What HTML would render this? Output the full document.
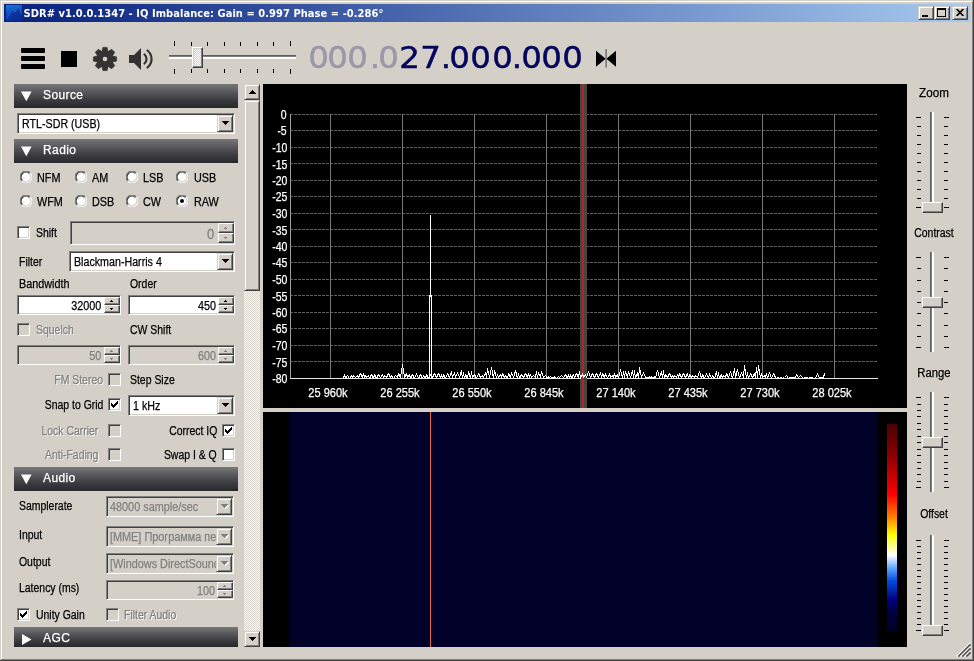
<!DOCTYPE html>
<html><head><meta charset="utf-8"><title>SDR#</title><style>
html,body{margin:0;padding:0;background:#D4D0C8;}
#w{will-change:transform;position:relative;width:974px;height:661px;overflow:hidden;font-family:"Liberation Sans",sans-serif;font-size:12px;}
#w div,#w span,#w svg{position:absolute;}
.t{font-size:12px;line-height:14px;white-space:nowrap;color:#000;-webkit-text-stroke:.25px;transform:scaleX(.87);transform-origin:0 0;}
.t.r{transform-origin:100% 0;text-align:right}
.t.c{transform-origin:50% 0;text-align:center}
.t.w{color:#fff}
.t.w.c{transform:scaleX(.92)}
.t.h{color:#fff;font-size:12px;line-height:14px;transform:none;letter-spacing:.4px}
.t.dis{color:#808080;text-shadow:1px 1px 0 #fff}
.t.dis2{color:#808080}
.title{font-family:"DejaVu Sans Condensed","DejaVu Sans",sans-serif;font-weight:bold;font-size:11px;line-height:16px;color:#fff;white-space:nowrap;transform-origin:0 0;letter-spacing:.06px;}
.sunk{box-sizing:border-box;border:1px solid;border-color:#808080 #fff #fff #808080;box-shadow:inset 1px 1px 0 #404040,inset -1px -1px 0 #D4D0C8;}
.btn{box-sizing:border-box;background:#D4D0C8;border:1px solid;border-color:#D4D0C8 #404040 #404040 #D4D0C8;box-shadow:inset 1px 1px 0 #fff,inset -1px -1px 0 #808080;}
.btn.thin{border-color:#fff #404040 #404040 #fff;box-shadow:inset -1px -1px 0 #808080;}
.thumb{box-sizing:border-box;background:repeating-conic-gradient(#fff 0% 25%, #D4D0C8 0% 50%) 0 0/2px 2px;border:1px solid;border-color:#fff #404040 #404040 #fff;box-shadow:inset -1px -1px 0 #808080,inset 1px 1px 0 #D4D0C8;}
.thumb.plain{background:#D4D0C8}
.hdr{background:linear-gradient(to bottom,#77777a 0%,#57575b 35%,#3a3a3e 70%,#28282c 100%);}
.fd{font-family:"DejaVu Sans","Liberation Sans",sans-serif;font-size:30px;line-height:36px;text-align:center;-webkit-text-stroke:.5px currentColor;transform:scaleX(1.08);transform-origin:50% 50%;}
.fd.g{color:#9a98a8}
.fd.d{color:#04045c}
</style></head><body><div id="w">
<div style="left:0px;top:0px;width:974px;height:661px;background:#D4D0C8"></div>
<div style="left:1px;top:1px;width:971px;height:1px;background:#fff"></div>
<div style="left:1px;top:1px;width:1px;height:658px;background:#fff"></div>
<div style="left:0px;top:660px;width:974px;height:1px;background:#404040"></div>
<div style="left:973px;top:0px;width:1px;height:661px;background:#404040"></div>
<div style="left:1px;top:659px;width:972px;height:1px;background:#808080"></div>
<div style="left:972px;top:1px;width:1px;height:659px;background:#808080"></div>
<div style="left:4px;top:4px;width:966px;height:18px;background:linear-gradient(to right,#0A2480 0%,#0A2480 3%,#A6CAF0 100%)"></div>
<svg style="left:6px;top:5px" width="16" height="16"><defs><linearGradient id="ig" x1="0" y1="0" x2="0.3" y2="1"><stop offset="0" stop-color="#1678e6"/><stop offset="0.5" stop-color="#1050c0"/><stop offset="1" stop-color="#0a2c98"/></linearGradient></defs><rect width="16" height="16" fill="url(#ig)"/><path d="M1 13 7 4 9 7 12 2 16 9V13z" fill="#0a2a8c" opacity=".55"/><path d="M1 13 7 4 9 7 12 2 16 9" fill="none" stroke="#4a8ae8" stroke-width=".7" opacity=".6"/></svg>
<span class="title" style="left:23.5px;top:6px">SDR# v1.0.0.1347 - IQ Imbalance: Gain = 0.997 Phase = -0.286°</span>
<div class="btn " style="left:918px;top:6px;width:16px;height:14px"><div style="left:3px;top:8px;width:6px;height:2px;background:#000"></div></div>
<div class="btn " style="left:934px;top:6px;width:16px;height:14px"><div style="left:2px;top:1px;width:9px;height:9px;box-sizing:border-box;border:1px solid #000;border-top-width:2px"></div></div>
<div class="btn " style="left:952px;top:6px;width:16px;height:14px"><svg style="left:3px;top:2px" width="8" height="7"><path d="M.6 0 7.4 7M7.4 0 .6 7" stroke="#000" stroke-width="1.7" fill="none"/></svg></div>
<div style="left:21px;top:48px;width:24px;height:5px;background:#000;border-radius:1px"></div>
<div style="left:21px;top:56px;width:24px;height:5px;background:#000;border-radius:1px"></div>
<div style="left:21px;top:64px;width:24px;height:5px;background:#000;border-radius:1px"></div>
<div style="left:61px;top:51px;width:16px;height:16px;background:#000"></div>
<svg style="left:92px;top:46px" width="26" height="26" viewBox="-13 -13 26 26"><g fill="#353232" stroke="#353232" stroke-width="0.7" stroke-linejoin="round"><polygon points="-3,-7.5 -2.1,-11.6 2.1,-11.6 3,-7.5" transform="rotate(0)"/><polygon points="-3,-7.5 -2.1,-11.6 2.1,-11.6 3,-7.5" transform="rotate(45)"/><polygon points="-3,-7.5 -2.1,-11.6 2.1,-11.6 3,-7.5" transform="rotate(90)"/><polygon points="-3,-7.5 -2.1,-11.6 2.1,-11.6 3,-7.5" transform="rotate(135)"/><polygon points="-3,-7.5 -2.1,-11.6 2.1,-11.6 3,-7.5" transform="rotate(180)"/><polygon points="-3,-7.5 -2.1,-11.6 2.1,-11.6 3,-7.5" transform="rotate(225)"/><polygon points="-3,-7.5 -2.1,-11.6 2.1,-11.6 3,-7.5" transform="rotate(270)"/><polygon points="-3,-7.5 -2.1,-11.6 2.1,-11.6 3,-7.5" transform="rotate(315)"/><circle r="8.3"/></g><circle r="2.3" fill="#D4D0C8"/></svg>
<svg style="left:128px;top:46px" width="27" height="26" viewBox="0 0 27 26"><path d="M1 9h5l7-7v22l-7-7H1z" fill="#353232"/><path d="M16.5 8.5a6 6 0 0 1 0 9" fill="none" stroke="#353232" stroke-width="2.2" stroke-linecap="round"/><path d="M19.5 4.5a11 11 0 0 1 0 17" fill="none" stroke="#353232" stroke-width="2.2" stroke-linecap="round"/></svg>
<div style="left:169px;top:55px;width:127px;height:2px;background:#808080"></div>
<div style="left:169px;top:55px;width:127px;height:1px;background:#606060"></div>
<div style="left:169px;top:57px;width:127px;height:2px;background:#fff"></div>
<div style="left:174px;top:41px;width:1px;height:5px;background:#000"></div>
<div style="left:174px;top:69px;width:1px;height:5px;background:#000"></div>
<div style="left:191px;top:42px;width:1px;height:4px;background:#000"></div>
<div style="left:191px;top:69px;width:1px;height:4px;background:#000"></div>
<div style="left:207px;top:42px;width:1px;height:4px;background:#000"></div>
<div style="left:207px;top:69px;width:1px;height:4px;background:#000"></div>
<div style="left:224px;top:42px;width:1px;height:4px;background:#000"></div>
<div style="left:224px;top:69px;width:1px;height:4px;background:#000"></div>
<div style="left:240px;top:42px;width:1px;height:4px;background:#000"></div>
<div style="left:240px;top:69px;width:1px;height:4px;background:#000"></div>
<div style="left:257px;top:42px;width:1px;height:4px;background:#000"></div>
<div style="left:257px;top:69px;width:1px;height:4px;background:#000"></div>
<div style="left:273px;top:42px;width:1px;height:4px;background:#000"></div>
<div style="left:273px;top:69px;width:1px;height:4px;background:#000"></div>
<div style="left:290px;top:41px;width:1px;height:5px;background:#000"></div>
<div style="left:290px;top:69px;width:1px;height:5px;background:#000"></div>
<div class="thumb" style="left:192px;top:47px;width:11px;height:21px"></div>
<span class="fd g" style="left:309px;top:40px;width:17px">0</span>
<span class="fd g" style="left:328.4px;top:40px;width:17px">0</span>
<span class="fd g" style="left:347.9px;top:40px;width:17px">0</span>
<span class="fd g" style="left:369.5px;top:40px;width:8px">.</span>
<span class="fd g" style="left:379.1px;top:40px;width:17px">0</span>
<span class="fd d" style="left:400.3px;top:40px;width:17px">2</span>
<span class="fd d" style="left:421.3px;top:40px;width:17px">7</span>
<span class="fd d" style="left:440.5px;top:40px;width:8px">.</span>
<span class="fd d" style="left:450px;top:40px;width:17px">0</span>
<span class="fd d" style="left:471.2px;top:40px;width:17px">0</span>
<span class="fd d" style="left:493px;top:40px;width:17px">0</span>
<span class="fd d" style="left:511.5px;top:40px;width:8px">.</span>
<span class="fd d" style="left:522px;top:40px;width:17px">0</span>
<span class="fd d" style="left:542.2px;top:40px;width:17px">0</span>
<span class="fd d" style="left:562.5px;top:40px;width:17px">0</span>
<svg style="left:596px;top:49px" width="21" height="19"><polygon points="0,1.7 9.6,9.7 0,17.7" fill="#000"/><polygon points="20,1.7 10.4,9.7 20,17.7" fill="#000"/><rect x="9.4" y="0.2" width="1.4" height="18.3" fill="#6c6c6c"/></svg>
<div class="hdr" style="left:14px;top:84px;width:224px;height:24px"></div>
<svg style="left:21px;top:91px" width="11" height="11"><polygon points="0,0.5 10.6,0.5 5.3,10.2" fill="#fff"/></svg>
<span class="t h" style="left:43px;top:88px">Source</span>
<div class="sunk" style="left:17px;top:113px;width:218px;height:21px;background:#fff"></div>
<div class="btn " style="left:217px;top:115px;width:16px;height:17px"></div>
<svg style="left:222px;top:121px" width="7" height="4" shape-rendering="crispEdges"><polygon points="0,0 7,0 3.5,4" fill="#000"/></svg>
<div style="left:19px;top:115px;width:198px;height:17px;overflow:hidden"><span class="t " style="left:3px;top:2px;transform:scaleX(0.89)">RTL-SDR (USB)</span></div>
<div class="hdr" style="left:14px;top:139px;width:224px;height:24px"></div>
<svg style="left:21px;top:146px" width="11" height="11"><polygon points="0,0.5 10.6,0.5 5.3,10.2" fill="#fff"/></svg>
<span class="t h" style="left:43px;top:143px">Radio</span>
<svg style="left:20px;top:171px" width="12" height="12"><circle cx="6" cy="6" r="5.5" fill="#fff"/><path d="M10.2 1.8A5.9 5.9 0 0 0 1.8 10.2" fill="none" stroke="#808080" stroke-width="1.1"/><path d="M9.5 2.5A4.9 4.9 0 0 0 2.5 9.5" fill="none" stroke="#404040" stroke-width="1.1"/><path d="M10.2 1.8A5.9 5.9 0 0 1 1.8 10.2" fill="none" stroke="#fff" stroke-width="1.1"/><path d="M9.5 2.5A4.9 4.9 0 0 1 2.5 9.5" fill="none" stroke="#D4D0C8" stroke-width="1.1"/></svg>
<span class="t " style="left:37px;top:171px;transform:scaleX(.9)">NFM</span>
<svg style="left:75px;top:171px" width="12" height="12"><circle cx="6" cy="6" r="5.5" fill="#fff"/><path d="M10.2 1.8A5.9 5.9 0 0 0 1.8 10.2" fill="none" stroke="#808080" stroke-width="1.1"/><path d="M9.5 2.5A4.9 4.9 0 0 0 2.5 9.5" fill="none" stroke="#404040" stroke-width="1.1"/><path d="M10.2 1.8A5.9 5.9 0 0 1 1.8 10.2" fill="none" stroke="#fff" stroke-width="1.1"/><path d="M9.5 2.5A4.9 4.9 0 0 1 2.5 9.5" fill="none" stroke="#D4D0C8" stroke-width="1.1"/></svg>
<span class="t " style="left:92px;top:171px;transform:scaleX(.9)">AM</span>
<svg style="left:126px;top:171px" width="12" height="12"><circle cx="6" cy="6" r="5.5" fill="#fff"/><path d="M10.2 1.8A5.9 5.9 0 0 0 1.8 10.2" fill="none" stroke="#808080" stroke-width="1.1"/><path d="M9.5 2.5A4.9 4.9 0 0 0 2.5 9.5" fill="none" stroke="#404040" stroke-width="1.1"/><path d="M10.2 1.8A5.9 5.9 0 0 1 1.8 10.2" fill="none" stroke="#fff" stroke-width="1.1"/><path d="M9.5 2.5A4.9 4.9 0 0 1 2.5 9.5" fill="none" stroke="#D4D0C8" stroke-width="1.1"/></svg>
<span class="t " style="left:143px;top:171px;transform:scaleX(.9)">LSB</span>
<svg style="left:176px;top:171px" width="12" height="12"><circle cx="6" cy="6" r="5.5" fill="#fff"/><path d="M10.2 1.8A5.9 5.9 0 0 0 1.8 10.2" fill="none" stroke="#808080" stroke-width="1.1"/><path d="M9.5 2.5A4.9 4.9 0 0 0 2.5 9.5" fill="none" stroke="#404040" stroke-width="1.1"/><path d="M10.2 1.8A5.9 5.9 0 0 1 1.8 10.2" fill="none" stroke="#fff" stroke-width="1.1"/><path d="M9.5 2.5A4.9 4.9 0 0 1 2.5 9.5" fill="none" stroke="#D4D0C8" stroke-width="1.1"/></svg>
<span class="t " style="left:194px;top:171px;transform:scaleX(.9)">USB</span>
<svg style="left:20px;top:195px" width="12" height="12"><circle cx="6" cy="6" r="5.5" fill="#fff"/><path d="M10.2 1.8A5.9 5.9 0 0 0 1.8 10.2" fill="none" stroke="#808080" stroke-width="1.1"/><path d="M9.5 2.5A4.9 4.9 0 0 0 2.5 9.5" fill="none" stroke="#404040" stroke-width="1.1"/><path d="M10.2 1.8A5.9 5.9 0 0 1 1.8 10.2" fill="none" stroke="#fff" stroke-width="1.1"/><path d="M9.5 2.5A4.9 4.9 0 0 1 2.5 9.5" fill="none" stroke="#D4D0C8" stroke-width="1.1"/></svg>
<span class="t " style="left:37px;top:195px;transform:scaleX(.9)">WFM</span>
<svg style="left:75px;top:195px" width="12" height="12"><circle cx="6" cy="6" r="5.5" fill="#fff"/><path d="M10.2 1.8A5.9 5.9 0 0 0 1.8 10.2" fill="none" stroke="#808080" stroke-width="1.1"/><path d="M9.5 2.5A4.9 4.9 0 0 0 2.5 9.5" fill="none" stroke="#404040" stroke-width="1.1"/><path d="M10.2 1.8A5.9 5.9 0 0 1 1.8 10.2" fill="none" stroke="#fff" stroke-width="1.1"/><path d="M9.5 2.5A4.9 4.9 0 0 1 2.5 9.5" fill="none" stroke="#D4D0C8" stroke-width="1.1"/></svg>
<span class="t " style="left:92px;top:195px;transform:scaleX(.9)">DSB</span>
<svg style="left:126px;top:195px" width="12" height="12"><circle cx="6" cy="6" r="5.5" fill="#fff"/><path d="M10.2 1.8A5.9 5.9 0 0 0 1.8 10.2" fill="none" stroke="#808080" stroke-width="1.1"/><path d="M9.5 2.5A4.9 4.9 0 0 0 2.5 9.5" fill="none" stroke="#404040" stroke-width="1.1"/><path d="M10.2 1.8A5.9 5.9 0 0 1 1.8 10.2" fill="none" stroke="#fff" stroke-width="1.1"/><path d="M9.5 2.5A4.9 4.9 0 0 1 2.5 9.5" fill="none" stroke="#D4D0C8" stroke-width="1.1"/></svg>
<span class="t " style="left:143px;top:195px;transform:scaleX(.9)">CW</span>
<svg style="left:176px;top:195px" width="12" height="12"><circle cx="6" cy="6" r="5.5" fill="#fff"/><path d="M10.2 1.8A5.9 5.9 0 0 0 1.8 10.2" fill="none" stroke="#808080" stroke-width="1.1"/><path d="M9.5 2.5A4.9 4.9 0 0 0 2.5 9.5" fill="none" stroke="#404040" stroke-width="1.1"/><path d="M10.2 1.8A5.9 5.9 0 0 1 1.8 10.2" fill="none" stroke="#fff" stroke-width="1.1"/><path d="M9.5 2.5A4.9 4.9 0 0 1 2.5 9.5" fill="none" stroke="#D4D0C8" stroke-width="1.1"/><circle cx="6" cy="6" r="2" fill="#000"/></svg>
<span class="t " style="left:194px;top:195px;transform:scaleX(.9)">RAW</span>
<div class="sunk" style="left:17px;top:226px;width:13px;height:13px;background:#fff"></div>
<span class="t " style="left:36px;top:226px;">Shift</span>
<div class="sunk" style="left:70px;top:221px;width:165px;height:24px;background:#D4D0C8"></div>
<div class="btn thin" style="left:218px;top:223px;width:16px;height:10px"></div>
<div class="btn thin" style="left:218px;top:233px;width:16px;height:10px"></div>
<svg style="left:224px;top:227px" width="3" height="2" shape-rendering="crispEdges"><polygon points="0,2 3,2 1.5,0" fill="#808080"/></svg>
<svg style="left:224px;top:237px" width="3" height="2" shape-rendering="crispEdges"><polygon points="0,0 3,0 1.5,2" fill="#808080"/></svg>
<span class="t r dis2" style="right:760px;top:225px;font-size:15px;line-height:17px;-webkit-text-stroke:.3px">0</span>
<span class="t " style="left:19px;top:255px;">Filter</span>
<div class="sunk" style="left:69px;top:251px;width:166px;height:21px;background:#fff"></div>
<div class="btn " style="left:217px;top:253px;width:16px;height:17px"></div>
<svg style="left:222px;top:259px" width="7" height="4" shape-rendering="crispEdges"><polygon points="0,0 7,0 3.5,4" fill="#000"/></svg>
<div style="left:71px;top:253px;width:146px;height:17px;overflow:hidden"><span class="t " style="left:3px;top:2px;transform:scaleX(0.89)">Blackman-Harris 4</span></div>
<span class="t " style="left:19px;top:277px;transform:scaleX(.9)">Bandwidth</span>
<span class="t " style="left:130px;top:277px;">Order</span>
<div class="sunk" style="left:17px;top:295px;width:104px;height:20px;background:#fff"></div>
<div class="btn thin" style="left:104px;top:297px;width:16px;height:8px"></div>
<div class="btn thin" style="left:104px;top:305px;width:16px;height:8px"></div>
<svg style="left:110px;top:300px" width="3" height="2" shape-rendering="crispEdges"><polygon points="0,2 3,2 1.5,0" fill="#000"/></svg>
<svg style="left:110px;top:308px" width="3" height="2" shape-rendering="crispEdges"><polygon points="0,0 3,0 1.5,2" fill="#000"/></svg>
<span class="t r " style="right:873px;top:299px;transform:scaleX(.9)">32000</span>
<div class="sunk" style="left:128px;top:295px;width:107px;height:20px;background:#fff"></div>
<div class="btn thin" style="left:218px;top:297px;width:16px;height:8px"></div>
<div class="btn thin" style="left:218px;top:305px;width:16px;height:8px"></div>
<svg style="left:224px;top:300px" width="3" height="2" shape-rendering="crispEdges"><polygon points="0,2 3,2 1.5,0" fill="#000"/></svg>
<svg style="left:224px;top:308px" width="3" height="2" shape-rendering="crispEdges"><polygon points="0,0 3,0 1.5,2" fill="#000"/></svg>
<span class="t r " style="right:758px;top:299px;transform:scaleX(.9)">450</span>
<div class="sunk" style="left:17px;top:323px;width:13px;height:13px;background:#D4D0C8"></div>
<span class="t dis" style="left:36px;top:323px;">Squelch</span>
<span class="t " style="left:130px;top:323px;">CW Shift</span>
<div class="sunk" style="left:17px;top:345px;width:104px;height:20px;background:#D4D0C8"></div>
<div class="btn thin" style="left:104px;top:347px;width:16px;height:8px"></div>
<div class="btn thin" style="left:104px;top:355px;width:16px;height:8px"></div>
<svg style="left:110px;top:350px" width="3" height="2" shape-rendering="crispEdges"><polygon points="0,2 3,2 1.5,0" fill="#808080"/></svg>
<svg style="left:110px;top:358px" width="3" height="2" shape-rendering="crispEdges"><polygon points="0,0 3,0 1.5,2" fill="#808080"/></svg>
<span class="t r dis2" style="right:873px;top:349px;transform:scaleX(.9)">50</span>
<div class="sunk" style="left:128px;top:345px;width:107px;height:20px;background:#D4D0C8"></div>
<div class="btn thin" style="left:218px;top:347px;width:16px;height:8px"></div>
<div class="btn thin" style="left:218px;top:355px;width:16px;height:8px"></div>
<svg style="left:224px;top:350px" width="3" height="2" shape-rendering="crispEdges"><polygon points="0,2 3,2 1.5,0" fill="#808080"/></svg>
<svg style="left:224px;top:358px" width="3" height="2" shape-rendering="crispEdges"><polygon points="0,0 3,0 1.5,2" fill="#808080"/></svg>
<span class="t r dis2" style="right:758px;top:349px;transform:scaleX(.9)">600</span>
<span class="t r dis" style="right:871px;top:373px;">FM Stereo</span>
<div class="sunk" style="left:108px;top:373px;width:13px;height:13px;background:#D4D0C8"></div>
<span class="t " style="left:130px;top:373px;">Step Size</span>
<span class="t r " style="right:871px;top:398px;">Snap to Grid</span>
<div class="sunk" style="left:108px;top:398px;width:13px;height:13px;background:#fff"></div>
<svg style="left:111px;top:401px" width="7" height="7" shape-rendering="crispEdges"><path d="M0 2v3l2 2 5-5v-3l-5 5z" fill="#000"/></svg>
<div class="sunk" style="left:128px;top:395px;width:107px;height:21px;background:#fff"></div>
<div class="btn " style="left:217px;top:397px;width:16px;height:17px"></div>
<svg style="left:222px;top:403px" width="7" height="4" shape-rendering="crispEdges"><polygon points="0,0 7,0 3.5,4" fill="#000"/></svg>
<div style="left:130px;top:397px;width:87px;height:17px;overflow:hidden"><span class="t " style="left:3px;top:2px;transform:scaleX(0.89)">1 kHz</span></div>
<span class="t r dis" style="right:876px;top:424px;">Lock Carrier</span>
<div class="sunk" style="left:108px;top:424px;width:13px;height:13px;background:#D4D0C8"></div>
<span class="t r " style="right:757px;top:424px;">Correct IQ</span>
<div class="sunk" style="left:222px;top:424px;width:13px;height:13px;background:#fff"></div>
<svg style="left:225px;top:427px" width="7" height="7" shape-rendering="crispEdges"><path d="M0 2v3l2 2 5-5v-3l-5 5z" fill="#000"/></svg>
<span class="t r dis" style="right:876px;top:448px;">Anti-Fading</span>
<div class="sunk" style="left:108px;top:448px;width:13px;height:13px;background:#D4D0C8"></div>
<span class="t r " style="right:757px;top:448px;">Swap I &amp; Q</span>
<div class="sunk" style="left:222px;top:448px;width:13px;height:13px;background:#fff"></div>
<div class="hdr" style="left:14px;top:467px;width:224px;height:24px"></div>
<svg style="left:21px;top:474px" width="11" height="11"><polygon points="0,0.5 10.6,0.5 5.3,10.2" fill="#fff"/></svg>
<span class="t h" style="left:43px;top:471px">Audio</span>
<span class="t " style="left:19px;top:499px;">Samplerate</span>
<div class="sunk" style="left:106px;top:496px;width:128px;height:21px;background:#D4D0C8"></div>
<div class="btn " style="left:216px;top:498px;width:16px;height:17px"></div>
<svg style="left:221px;top:504px" width="7" height="4" shape-rendering="crispEdges"><polygon points="0,0 7,0 3.5,4" fill="#808080"/></svg>
<svg style="left:222px;top:505px" width="7" height="4" shape-rendering="crispEdges"><polygon points="0,0 7,0 3.5,4" fill="#fff"/></svg>
<svg style="left:221px;top:504px" width="7" height="4" shape-rendering="crispEdges"><polygon points="0,0 7,0 3.5,4" fill="#808080"/></svg>
<div style="left:108px;top:498px;width:108px;height:17px;overflow:hidden"><span class="t dis2" style="left:1.5px;top:2px;transform:scaleX(0.905)">48000 sample/sec</span></div>
<span class="t " style="left:19px;top:528px;">Input</span>
<div class="sunk" style="left:106px;top:526px;width:128px;height:21px;background:#D4D0C8"></div>
<div class="btn " style="left:216px;top:528px;width:16px;height:17px"></div>
<svg style="left:221px;top:534px" width="7" height="4" shape-rendering="crispEdges"><polygon points="0,0 7,0 3.5,4" fill="#808080"/></svg>
<svg style="left:222px;top:535px" width="7" height="4" shape-rendering="crispEdges"><polygon points="0,0 7,0 3.5,4" fill="#fff"/></svg>
<svg style="left:221px;top:534px" width="7" height="4" shape-rendering="crispEdges"><polygon points="0,0 7,0 3.5,4" fill="#808080"/></svg>
<div style="left:108px;top:528px;width:108px;height:17px;overflow:hidden"><span class="t dis2" style="left:1.5px;top:2px;transform:scaleX(0.905)">[MME] Программа пе</span></div>
<span class="t " style="left:19px;top:555px;">Output</span>
<div class="sunk" style="left:106px;top:553px;width:128px;height:21px;background:#D4D0C8"></div>
<div class="btn " style="left:216px;top:555px;width:16px;height:17px"></div>
<svg style="left:221px;top:561px" width="7" height="4" shape-rendering="crispEdges"><polygon points="0,0 7,0 3.5,4" fill="#808080"/></svg>
<svg style="left:222px;top:562px" width="7" height="4" shape-rendering="crispEdges"><polygon points="0,0 7,0 3.5,4" fill="#fff"/></svg>
<svg style="left:221px;top:561px" width="7" height="4" shape-rendering="crispEdges"><polygon points="0,0 7,0 3.5,4" fill="#808080"/></svg>
<div style="left:108px;top:555px;width:108px;height:17px;overflow:hidden"><span class="t dis2" style="left:1.5px;top:2px;transform:scaleX(0.905)">[Windows DirectSound</span></div>
<span class="t " style="left:19px;top:581px;">Latency (ms)</span>
<div class="sunk" style="left:106px;top:580px;width:128px;height:20px;background:#D4D0C8"></div>
<div class="btn thin" style="left:217px;top:582px;width:16px;height:8px"></div>
<div class="btn thin" style="left:217px;top:590px;width:16px;height:8px"></div>
<svg style="left:223px;top:585px" width="3" height="2" shape-rendering="crispEdges"><polygon points="0,2 3,2 1.5,0" fill="#808080"/></svg>
<svg style="left:223px;top:593px" width="3" height="2" shape-rendering="crispEdges"><polygon points="0,0 3,0 1.5,2" fill="#808080"/></svg>
<span class="t r dis2" style="right:759px;top:584px;transform:scaleX(.9)">100</span>
<div class="sunk" style="left:17px;top:608px;width:13px;height:13px;background:#fff"></div>
<svg style="left:20px;top:611px" width="7" height="7" shape-rendering="crispEdges"><path d="M0 2v3l2 2 5-5v-3l-5 5z" fill="#000"/></svg>
<span class="t " style="left:36px;top:608px;">Unity Gain</span>
<div class="sunk" style="left:106px;top:608px;width:13px;height:13px;background:#D4D0C8"></div>
<span class="t dis" style="left:124px;top:608px;">Filter Audio</span>
<div class="hdr" style="left:14px;top:627px;width:224px;height:20px"></div>
<svg style="left:21px;top:634px" width="11" height="11"><polygon points="1,0 10.5,5.5 1,11" fill="#fff"/></svg>
<span class="t h" style="left:43px;top:631px">AGC</span>
<div style="left:244px;top:84px;width:16px;height:563px;background:repeating-conic-gradient(#fff 0% 25%, #D4D0C8 0% 50%) 0 0/2px 2px"></div>
<div class="btn " style="left:244px;top:84px;width:16px;height:16px"></div>
<svg style="left:249px;top:90px" width="7" height="4" shape-rendering="crispEdges"><polygon points="0,4 7,4 3.5,0" fill="#000"/></svg>
<div class="btn " style="left:244px;top:631px;width:16px;height:16px"></div>
<svg style="left:249px;top:637px" width="7" height="4" shape-rendering="crispEdges"><polygon points="0,0 7,0 3.5,4" fill="#000"/></svg>
<div class="btn " style="left:244px;top:100px;width:16px;height:191px"></div>
<svg style="left:263px;top:84px" width="644" height="324" shape-rendering="crispEdges"><rect width="644" height="324" fill="#000"/><line x1="27" y1="30.5" x2="615" y2="30.5" stroke="#5c5c5c" stroke-dasharray="3 1"/><line x1="27" y1="46.5" x2="615" y2="46.5" stroke="#5c5c5c" stroke-dasharray="3 1"/><line x1="27" y1="63.5" x2="615" y2="63.5" stroke="#5c5c5c" stroke-dasharray="3 1"/><line x1="27" y1="79.5" x2="615" y2="79.5" stroke="#5c5c5c" stroke-dasharray="3 1"/><line x1="27" y1="96.5" x2="615" y2="96.5" stroke="#5c5c5c" stroke-dasharray="3 1"/><line x1="27" y1="112.5" x2="615" y2="112.5" stroke="#5c5c5c" stroke-dasharray="3 1"/><line x1="27" y1="129.5" x2="615" y2="129.5" stroke="#5c5c5c" stroke-dasharray="3 1"/><line x1="27" y1="145.5" x2="615" y2="145.5" stroke="#5c5c5c" stroke-dasharray="3 1"/><line x1="27" y1="162.5" x2="615" y2="162.5" stroke="#5c5c5c" stroke-dasharray="3 1"/><line x1="27" y1="178.5" x2="615" y2="178.5" stroke="#5c5c5c" stroke-dasharray="3 1"/><line x1="27" y1="195.5" x2="615" y2="195.5" stroke="#5c5c5c" stroke-dasharray="3 1"/><line x1="27" y1="211.5" x2="615" y2="211.5" stroke="#5c5c5c" stroke-dasharray="3 1"/><line x1="27" y1="228.5" x2="615" y2="228.5" stroke="#5c5c5c" stroke-dasharray="3 1"/><line x1="27" y1="244.5" x2="615" y2="244.5" stroke="#5c5c5c" stroke-dasharray="3 1"/><line x1="27" y1="261.5" x2="615" y2="261.5" stroke="#5c5c5c" stroke-dasharray="3 1"/><line x1="27" y1="277.5" x2="615" y2="277.5" stroke="#5c5c5c" stroke-dasharray="3 1"/><line x1="67.5" y1="30" x2="67.5" y2="294" stroke="#787878"/><line x1="139.5" y1="30" x2="139.5" y2="294" stroke="#787878"/><line x1="211.5" y1="30" x2="211.5" y2="294" stroke="#787878"/><line x1="283.5" y1="30" x2="283.5" y2="294" stroke="#787878"/><line x1="355.5" y1="30" x2="355.5" y2="294" stroke="#787878"/><line x1="427.5" y1="30" x2="427.5" y2="294" stroke="#787878"/><line x1="499.5" y1="30" x2="499.5" y2="294" stroke="#787878"/><line x1="571.5" y1="30" x2="571.5" y2="294" stroke="#787878"/><line x1="27.5" y1="30" x2="27.5" y2="295" stroke="#a0a0a0"/><line x1="27" y1="294.5" x2="615" y2="294.5" stroke="#e8e8e8"/><rect x="317" y="0" width="7" height="324" fill="#444"/><rect x="319" y="0" width="2" height="324" fill="#b02820"/><polyline points="80.5,294.5 81.5,290.5 82.5,294.5 84.5,291.5 86.5,294.5 88.5,291.5 89.5,293.5 90.5,291.5 92.5,293.5 94.5,291.5 95.5,293.5 97.5,289.5 99.5,293.5 100.5,289.5 101.5,293.5 102.5,291.5 103.5,293.5 105.5,291.5 106.5,294.5 108.5,290.5 110.5,294.5 111.5,290.5 113.5,294.5 115.5,290.5 117.5,293.5 119.5,290.5 120.5,293.5 121.5,291.5 123.5,293.5 125.5,289.5 127.5,293.5 128.5,291.5 130.5,294.5 132.5,291.5 134.5,293.5 135.5,289.5 137.5,293.5 139.5,280.5 141.5,293.5 143.5,289.5 144.5,293.5 146.5,290.5 147.5,294.5 149.5,290.5 151.5,294.5 153.5,289.5 155.5,294.5 157.5,290.5 159.5,294.5 160.5,291.5 162.5,294.5 163.5,290.5 165.5,294.5 167.5,290.5 169.5,293.5 171.5,289.5 173.5,293.5 175.5,289.5 177.5,293.5 178.5,290.5 179.5,294.5 180.5,290.5 182.5,294.5 184.5,289.5 186.5,293.5 188.5,287.5 189.5,293.5 191.5,288.5 192.5,293.5 194.5,288.5 196.5,293.5 198.5,286.5 199.5,294.5 200.5,288.5 201.5,294.5 202.5,290.5 204.5,294.5 205.5,287.5 207.5,294.5 208.5,287.5 209.5,293.5 211.5,290.5 213.5,294.5 215.5,289.5 217.5,293.5 219.5,291.5 220.5,293.5 222.5,288.5 223.5,293.5 224.5,284.5 226.5,293.5 228.5,283.5 230.5,294.5 231.5,286.5 233.5,293.5 234.5,290.5 235.5,293.5 237.5,290.5 238.5,293.5 239.5,289.5 241.5,293.5 242.5,291.5 244.5,294.5 245.5,289.5 247.5,293.5 248.5,288.5 250.5,293.5 252.5,286.5 254.5,294.5 255.5,289.5 256.5,294.5 258.5,290.5 260.5,293.5 262.5,289.5 264.5,293.5 265.5,289.5 266.5,293.5 267.5,290.5 268.5,293.5 270.5,291.5 272.5,293.5 273.5,287.5 274.5,293.5 275.5,288.5 277.5,293.5 278.5,287.5 280.5,293.5 282.5,291.5 284.5,294.5 285.5,292.5 286.5,293.5 287.5,292.5 288.5,293.5 289.5,293.5 290.5,294.5 291.5,292.5 293.5,294.5 295.5,292.5 296.5,293.5 298.5,291.5 300.5,293.5 302.5,290.5 304.5,294.5 305.5,290.5 306.5,293.5 307.5,290.5 308.5,294.5 310.5,290.5 311.5,293.5 313.5,289.5 315.5,293.5 316.5,287.5 317.5,294.5 319.5,289.5 320.5,293.5 322.5,290.5 323.5,293.5 325.5,287.5 327.5,293.5 329.5,289.5 331.5,293.5 333.5,289.5 335.5,293.5 337.5,288.5 338.5,293.5 339.5,289.5 341.5,293.5 342.5,289.5 344.5,294.5 346.5,289.5 347.5,293.5 349.5,291.5 350.5,293.5 351.5,289.5 352.5,293.5 354.5,290.5 355.5,294.5 357.5,285.5 359.5,294.5 360.5,287.5 361.5,293.5 362.5,287.5 364.5,293.5 365.5,287.5 367.5,293.5 369.5,286.5 370.5,293.5 371.5,286.5 372.5,294.5 374.5,288.5 375.5,294.5 376.5,283.5 378.5,293.5 380.5,288.5 382.5,293.5 384.5,293.5 385.5,293.5 386.5,292.5 387.5,294.5 388.5,292.5 390.5,294.5 391.5,292.5 392.5,293.5 394.5,286.5 396.5,293.5 398.5,287.5 399.5,293.5 400.5,286.5 401.5,294.5 402.5,290.5 404.5,293.5 406.5,289.5 408.5,293.5 409.5,291.5 410.5,293.5 411.5,291.5 413.5,293.5 414.5,290.5 415.5,293.5 416.5,289.5 418.5,293.5 420.5,289.5 422.5,293.5 424.5,289.5 425.5,294.5 426.5,290.5 428.5,293.5 429.5,291.5 431.5,293.5 432.5,291.5 434.5,293.5 436.5,287.5 438.5,294.5 439.5,290.5 441.5,294.5 443.5,289.5 445.5,294.5 446.5,289.5 448.5,294.5 449.5,291.5 451.5,294.5 453.5,287.5 454.5,294.5 455.5,288.5 456.5,294.5 458.5,290.5 459.5,294.5 460.5,291.5 462.5,293.5 463.5,289.5 465.5,293.5 467.5,287.5 469.5,294.5 471.5,284.5 472.5,293.5 474.5,285.5 476.5,294.5 478.5,288.5 480.5,293.5 481.5,281.5 483.5,293.5 484.5,288.5 485.5,294.5 487.5,289.5 489.5,293.5 491.5,289.5 492.5,293.5 493.5,283.5 494.5,293.5 495.5,281.5 497.5,293.5 498.5,289.5 499.5,293.5 501.5,291.5 502.5,293.5 503.5,289.5 504.5,294.5 506.5,288.5 508.5,294.5 510.5,289.5 512.5,293.5 513.5,294.5 515.5,293.5 516.5,294.5 517.5,293.5 519.5,294.5 521.5,293.5 523.5,291.5 525.5,294.5 527.5,293.5 529.5,293.5 530.5,293.5 532.5,293.5 533.5,290.5 535.5,293.5 537.5,291.5 539.5,293.5 540.5,294.5 542.5,293.5 544.5,293.5 545.5,294.5 547.5,293.5 548.5,293.5 550.5,294.5 552.5,294.5 554.5,289.5 556.5,294.5 558.5,293.5 560.5,293.5 561.5,289.5" fill="none" stroke="#fff" stroke-width="1" stroke-linejoin="bevel" shape-rendering="crispEdges"/><rect x="166" y="211" width="1" height="83" fill="#fff"/><rect x="168" y="211" width="1" height="83" fill="#fff"/><rect x="167" y="131" width="1" height="82" fill="#fff"/></svg>
<span class="t w r" style="right:687px;top:108px">0</span>
<span class="t w r" style="right:687px;top:124px">-5</span>
<span class="t w r" style="right:687px;top:141px">-10</span>
<span class="t w r" style="right:687px;top:158px">-15</span>
<span class="t w r" style="right:687px;top:174px">-20</span>
<span class="t w r" style="right:687px;top:190px">-25</span>
<span class="t w r" style="right:687px;top:207px">-30</span>
<span class="t w r" style="right:687px;top:224px">-35</span>
<span class="t w r" style="right:687px;top:240px">-40</span>
<span class="t w r" style="right:687px;top:256px">-45</span>
<span class="t w r" style="right:687px;top:273px">-50</span>
<span class="t w r" style="right:687px;top:290px">-55</span>
<span class="t w r" style="right:687px;top:306px">-60</span>
<span class="t w r" style="right:687px;top:322px">-65</span>
<span class="t w r" style="right:687px;top:339px">-70</span>
<span class="t w r" style="right:687px;top:356px">-75</span>
<span class="t w r" style="right:687px;top:372px">-80</span>
<span class="t w c" style="left:298.0px;width:60px;top:386px">25 960k</span>
<span class="t w c" style="left:370.0px;width:60px;top:386px">26 255k</span>
<span class="t w c" style="left:442.0px;width:60px;top:386px">26 550k</span>
<span class="t w c" style="left:514.0px;width:60px;top:386px">26 845k</span>
<span class="t w c" style="left:586.0px;width:60px;top:386px">27 140k</span>
<span class="t w c" style="left:658.0px;width:60px;top:386px">27 435k</span>
<span class="t w c" style="left:730.0px;width:60px;top:386px">27 730k</span>
<span class="t w c" style="left:802.0px;width:60px;top:386px">28 025k</span>
<div style="left:263px;top:412px;width:644px;height:235px;background:#000"></div>
<div style="left:290px;top:412px;width:587px;height:235px;background:#01012a"></div>
<div style="left:430px;top:412px;width:1px;height:235px;background:#de6a52"></div>
<div style="left:887px;top:424px;width:10px;height:207px;background:linear-gradient(to bottom,#4c0000 0%,#900000 16%,#ff0000 34%,#ff8000 45%,#ffff00 53.5%,#ffffff 63.5%,#60a8ff 69.5%,#0048e0 76%,#000080 85%,#000040 91%,#000026 100%)"></div>
<span class="t c" style="left:903.5px;width:60px;top:86px;transform:scaleX(0.97)">Zoom</span>
<div style="left:930px;top:112px;width:2px;height:100px;background:#808080"></div>
<div style="left:930px;top:112px;width:1px;height:100px;background:#606060"></div>
<div style="left:932px;top:112px;width:2px;height:100px;background:#fff"></div>
<div style="left:916px;top:117px;width:5px;height:1px;background:#000"></div>
<div style="left:944px;top:117px;width:5px;height:1px;background:#000"></div>
<div style="left:917px;top:126px;width:4px;height:1px;background:#000"></div>
<div style="left:944px;top:126px;width:4px;height:1px;background:#000"></div>
<div style="left:917px;top:135px;width:4px;height:1px;background:#000"></div>
<div style="left:944px;top:135px;width:4px;height:1px;background:#000"></div>
<div style="left:917px;top:144px;width:4px;height:1px;background:#000"></div>
<div style="left:944px;top:144px;width:4px;height:1px;background:#000"></div>
<div style="left:917px;top:153px;width:4px;height:1px;background:#000"></div>
<div style="left:944px;top:153px;width:4px;height:1px;background:#000"></div>
<div style="left:917px;top:162px;width:4px;height:1px;background:#000"></div>
<div style="left:944px;top:162px;width:4px;height:1px;background:#000"></div>
<div style="left:917px;top:171px;width:4px;height:1px;background:#000"></div>
<div style="left:944px;top:171px;width:4px;height:1px;background:#000"></div>
<div style="left:917px;top:180px;width:4px;height:1px;background:#000"></div>
<div style="left:944px;top:180px;width:4px;height:1px;background:#000"></div>
<div style="left:917px;top:189px;width:4px;height:1px;background:#000"></div>
<div style="left:944px;top:189px;width:4px;height:1px;background:#000"></div>
<div style="left:917px;top:198px;width:4px;height:1px;background:#000"></div>
<div style="left:944px;top:198px;width:4px;height:1px;background:#000"></div>
<div style="left:916px;top:207px;width:5px;height:1px;background:#000"></div>
<div style="left:944px;top:207px;width:5px;height:1px;background:#000"></div>
<div class="thumb plain" style="left:922px;top:202px;width:21px;height:11px"></div>
<span class="t c" style="left:903.5px;width:60px;top:226px;transform:scaleX(0.87)">Contrast</span>
<div style="left:930px;top:252px;width:2px;height:100px;background:#808080"></div>
<div style="left:930px;top:252px;width:1px;height:100px;background:#606060"></div>
<div style="left:932px;top:252px;width:2px;height:100px;background:#fff"></div>
<div style="left:916px;top:257px;width:5px;height:1px;background:#000"></div>
<div style="left:944px;top:257px;width:5px;height:1px;background:#000"></div>
<div style="left:917px;top:268px;width:4px;height:1px;background:#000"></div>
<div style="left:944px;top:268px;width:4px;height:1px;background:#000"></div>
<div style="left:917px;top:280px;width:4px;height:1px;background:#000"></div>
<div style="left:944px;top:280px;width:4px;height:1px;background:#000"></div>
<div style="left:917px;top:291px;width:4px;height:1px;background:#000"></div>
<div style="left:944px;top:291px;width:4px;height:1px;background:#000"></div>
<div style="left:917px;top:302px;width:4px;height:1px;background:#000"></div>
<div style="left:944px;top:302px;width:4px;height:1px;background:#000"></div>
<div style="left:917px;top:313px;width:4px;height:1px;background:#000"></div>
<div style="left:944px;top:313px;width:4px;height:1px;background:#000"></div>
<div style="left:917px;top:325px;width:4px;height:1px;background:#000"></div>
<div style="left:944px;top:325px;width:4px;height:1px;background:#000"></div>
<div style="left:917px;top:336px;width:4px;height:1px;background:#000"></div>
<div style="left:944px;top:336px;width:4px;height:1px;background:#000"></div>
<div style="left:916px;top:347px;width:5px;height:1px;background:#000"></div>
<div style="left:944px;top:347px;width:5px;height:1px;background:#000"></div>
<div class="thumb plain" style="left:922px;top:297px;width:21px;height:11px"></div>
<span class="t c" style="left:903.5px;width:60px;top:366px;transform:scaleX(0.94)">Range</span>
<div style="left:930px;top:392px;width:2px;height:100px;background:#808080"></div>
<div style="left:930px;top:392px;width:1px;height:100px;background:#606060"></div>
<div style="left:932px;top:392px;width:2px;height:100px;background:#fff"></div>
<div style="left:916px;top:397px;width:5px;height:1px;background:#000"></div>
<div style="left:944px;top:397px;width:5px;height:1px;background:#000"></div>
<div style="left:917px;top:404px;width:4px;height:1px;background:#000"></div>
<div style="left:944px;top:404px;width:4px;height:1px;background:#000"></div>
<div style="left:917px;top:410px;width:4px;height:1px;background:#000"></div>
<div style="left:944px;top:410px;width:4px;height:1px;background:#000"></div>
<div style="left:917px;top:416px;width:4px;height:1px;background:#000"></div>
<div style="left:944px;top:416px;width:4px;height:1px;background:#000"></div>
<div style="left:917px;top:423px;width:4px;height:1px;background:#000"></div>
<div style="left:944px;top:423px;width:4px;height:1px;background:#000"></div>
<div style="left:917px;top:429px;width:4px;height:1px;background:#000"></div>
<div style="left:944px;top:429px;width:4px;height:1px;background:#000"></div>
<div style="left:917px;top:436px;width:4px;height:1px;background:#000"></div>
<div style="left:944px;top:436px;width:4px;height:1px;background:#000"></div>
<div style="left:917px;top:442px;width:4px;height:1px;background:#000"></div>
<div style="left:944px;top:442px;width:4px;height:1px;background:#000"></div>
<div style="left:917px;top:449px;width:4px;height:1px;background:#000"></div>
<div style="left:944px;top:449px;width:4px;height:1px;background:#000"></div>
<div style="left:917px;top:455px;width:4px;height:1px;background:#000"></div>
<div style="left:944px;top:455px;width:4px;height:1px;background:#000"></div>
<div style="left:917px;top:462px;width:4px;height:1px;background:#000"></div>
<div style="left:944px;top:462px;width:4px;height:1px;background:#000"></div>
<div style="left:917px;top:468px;width:4px;height:1px;background:#000"></div>
<div style="left:944px;top:468px;width:4px;height:1px;background:#000"></div>
<div style="left:917px;top:474px;width:4px;height:1px;background:#000"></div>
<div style="left:944px;top:474px;width:4px;height:1px;background:#000"></div>
<div style="left:917px;top:481px;width:4px;height:1px;background:#000"></div>
<div style="left:944px;top:481px;width:4px;height:1px;background:#000"></div>
<div style="left:916px;top:487px;width:5px;height:1px;background:#000"></div>
<div style="left:944px;top:487px;width:5px;height:1px;background:#000"></div>
<div class="thumb plain" style="left:922px;top:437px;width:21px;height:11px"></div>
<span class="t c" style="left:903.5px;width:60px;top:507px;transform:scaleX(0.87)">Offset</span>
<div style="left:930px;top:535px;width:2px;height:100px;background:#808080"></div>
<div style="left:930px;top:535px;width:1px;height:100px;background:#606060"></div>
<div style="left:932px;top:535px;width:2px;height:100px;background:#fff"></div>
<div style="left:916px;top:540px;width:5px;height:1px;background:#000"></div>
<div style="left:944px;top:540px;width:5px;height:1px;background:#000"></div>
<div style="left:917px;top:546px;width:4px;height:1px;background:#000"></div>
<div style="left:944px;top:546px;width:4px;height:1px;background:#000"></div>
<div style="left:917px;top:552px;width:4px;height:1px;background:#000"></div>
<div style="left:944px;top:552px;width:4px;height:1px;background:#000"></div>
<div style="left:917px;top:558px;width:4px;height:1px;background:#000"></div>
<div style="left:944px;top:558px;width:4px;height:1px;background:#000"></div>
<div style="left:917px;top:564px;width:4px;height:1px;background:#000"></div>
<div style="left:944px;top:564px;width:4px;height:1px;background:#000"></div>
<div style="left:917px;top:570px;width:4px;height:1px;background:#000"></div>
<div style="left:944px;top:570px;width:4px;height:1px;background:#000"></div>
<div style="left:917px;top:576px;width:4px;height:1px;background:#000"></div>
<div style="left:944px;top:576px;width:4px;height:1px;background:#000"></div>
<div style="left:917px;top:582px;width:4px;height:1px;background:#000"></div>
<div style="left:944px;top:582px;width:4px;height:1px;background:#000"></div>
<div style="left:917px;top:588px;width:4px;height:1px;background:#000"></div>
<div style="left:944px;top:588px;width:4px;height:1px;background:#000"></div>
<div style="left:917px;top:594px;width:4px;height:1px;background:#000"></div>
<div style="left:944px;top:594px;width:4px;height:1px;background:#000"></div>
<div style="left:917px;top:600px;width:4px;height:1px;background:#000"></div>
<div style="left:944px;top:600px;width:4px;height:1px;background:#000"></div>
<div style="left:917px;top:606px;width:4px;height:1px;background:#000"></div>
<div style="left:944px;top:606px;width:4px;height:1px;background:#000"></div>
<div style="left:917px;top:612px;width:4px;height:1px;background:#000"></div>
<div style="left:944px;top:612px;width:4px;height:1px;background:#000"></div>
<div style="left:917px;top:618px;width:4px;height:1px;background:#000"></div>
<div style="left:944px;top:618px;width:4px;height:1px;background:#000"></div>
<div style="left:917px;top:624px;width:4px;height:1px;background:#000"></div>
<div style="left:944px;top:624px;width:4px;height:1px;background:#000"></div>
<div style="left:916px;top:630px;width:5px;height:1px;background:#000"></div>
<div style="left:944px;top:630px;width:5px;height:1px;background:#000"></div>
<div class="thumb plain" style="left:922px;top:625px;width:21px;height:11px"></div>
<svg style="left:956px;top:642px" width="15" height="15"><path d="M14.5 0.6L0.6 14.5" stroke="#fff" stroke-width="1.1"/><path d="M14.5 2.3L2.3 14.5" stroke="#505050" stroke-width="1.7"/><path d="M14.5 4.6L4.6 14.5" stroke="#fff" stroke-width="1.1"/><path d="M14.5 6.3L6.3 14.5" stroke="#505050" stroke-width="1.7"/><path d="M14.5 8.6L8.6 14.5" stroke="#fff" stroke-width="1.1"/><path d="M14.5 10.3L10.3 14.5" stroke="#505050" stroke-width="1.7"/></svg>
</div></body></html>
